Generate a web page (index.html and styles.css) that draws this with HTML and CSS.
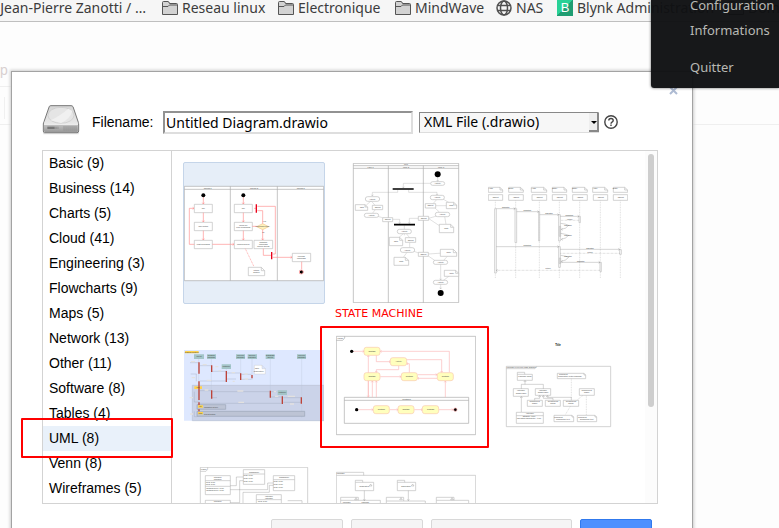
FILE: index.html
```html
<!DOCTYPE html>
<html lang="en">
<head>
<meta charset="utf-8">
<title>New diagram</title>
<link rel="stylesheet" href="styles.css">
</head>
<body>
<svg class="symbols" aria-hidden="true">
  <symbol id="folder" viewBox="0 0 16 14"><path d="M.5 13V1.5Q.5.5 1.5.5H6Q7 .5 7.5 2.500H14.500Q15.500 2.500 15.500 3.500V13.500H.500Z" fill="#d2d2d2" stroke="#555"/><path d="M1 5.500H6L7.500 4H15" fill="none" stroke="#555"/></symbol>
</svg>
<nav class="bookmarks" aria-label="Bookmarks">
  <a class="bookmark first" href="#">Jean-Pierre Zanotti / …</a>
  <a class="bookmark" href="#"><svg class="folder"><use href="#folder"/></svg>Reseau linux</a>
  <a class="bookmark" href="#"><svg class="folder"><use href="#folder"/></svg>Electronique</a>
  <a class="bookmark" href="#"><svg class="folder"><use href="#folder"/></svg>MindWave</a>
  <a class="bookmark" href="#"><svg class="site" viewBox="0 0 16 16" fill="none" stroke="#505050" stroke-width="1.500"><circle cx="8" cy="8" r="7"/><ellipse cx="8" cy="8" rx="3.500" ry="7"/><path d="M1.500 5.500H14.500M1.500 10.500H14.500"/></svg>NAS</a>
  <a class="bookmark" href="#"><span class="blynk">B</span>Blynk Administration</a>
  <a class="bookmark" href="#"><svg class="folder"><use href="#folder"/></svg>Domb</a>
</nav>
<div class="menu">
  <button>Configuration</button>
  <button>Informations</button>
  <button class="quit">Quitter</button>
</div>
<main class="workspace">
  <div class="backdrop" aria-hidden="true"><span>p</span><i></i></div>
  <section class="dialog" role="dialog" aria-label="New diagram">
    <button class="close" aria-label="Close"><svg viewBox="0 0 9 9"><path d="M1 1L8 8M8 1L1 8" stroke="#aebbd3" stroke-width="2"/></svg></button>
    <form class="filebar">
      <svg class="drive" viewBox="0 0 114 90" aria-hidden="true">
        <defs><linearGradient id="top" x2="0" y2="1"><stop stop-color="#d5d5d5"/><stop offset="1" stop-color="#f1f1f1"/></linearGradient><linearGradient id="front" x2="0" y2="1"><stop stop-color="#c2c2c2"/><stop offset="1" stop-color="#999"/></linearGradient></defs>
        <path d="M4 85H110" stroke="#ddd" stroke-width="6"/>
        <path d="M22 4Q24 2 27 2H87Q91 2 93 5L109 52Q110 56 110 60V78Q110 83 105 83H8Q4 83 4 78V57Q4 53 6 50Z" fill="url(#top)" stroke="#777" stroke-width="3"/>
        <ellipse cx="57" cy="31" rx="39" ry="24" fill="#e5e5e5" stroke="#c9c9c9" stroke-width="2"/>
        <path d="M26 46Q58 30 79 11L91 18Q84 42 57 54Z" fill="#f0f0f0"/>
        <path d="M6 59H108V79Q108 81 105 81H9Q6 81 6 78Z" fill="url(#front)"/><path d="M6 58H108" stroke="#f8f8f8" stroke-width="2"/>
        <path d="M16 65H38V72H16Z" fill="#777"/><path d="M40 65V72M44 65V72M48 65V72M66 63V77M72 63V77M78 63V77M84 63V77M90 63V77M96 63V77M102 63V77" stroke="#888" stroke-width="2"/>
      </svg>
      <label class="file-label" for="filename">Filename:</label>
      <input class="filename" id="filename" value="Untitled Diagram.drawio">
      <span class="format"><select aria-label="File format"><option>XML File (.drawio)</option></select><svg class="arrow" viewBox="0 0 10 19"><path d="M0 0H10V19H0Z" fill="#eee"/><path d="M0 18H9V0" fill="none" stroke="#888" stroke-width="2"/><path d="M2 8H8L5 11Z"/></svg></span>
      <a class="help" href="#" aria-label="Help"><svg viewBox="0 0 14 14" fill="none" stroke="#444"><circle cx="7" cy="7" r="6.200" stroke-width="1.400"/><path d="M4.800 5.500Q4.800 3.500 7 3.500T9.200 5.500Q9.200 6.500 8 7.200Q7 7.800 7 8.700M7 9.600V11" stroke-width="1.400"/></svg></a>
    </form>
    <div class="picker">
      <ul class="categories">
        <li>Basic (9)</li><li>Business (14)</li><li>Charts (5)</li><li>Cloud (41)</li><li>Engineering (3)</li><li>Flowcharts (9)</li><li>Maps (5)</li><li>Network (13)</li><li>Other (11)</li><li>Software (8)</li><li>Tables (4)</li><li class="selected">UML (8)</li><li>Venn (8)</li><li>Wireframes (5)</li>
      </ul>
      <div class="gallery">
        <button class="thumb chosen" aria-label="Activity diagram with threads">
          <svg viewBox="27 24 420 420">
            <path class="box grey" d="M28 94H446V377H28ZM28 103H446M166 94V377M307 94V377"/>
            <g class="box"><path d="M58 148H112V173H58ZM58 202H112V227H58ZM58 256H112V281H58ZM178 148H232V173H178ZM178 202H232V227H178ZM178 256H232V281H178ZM237 256H293V281H237ZM352 295H407V320H352Z"/><path d="M220 337H259L269 347V362H220ZM259 337V347H269"/></g>
            <path class="decision" d="M245 215L263 206L281 215L263 224Z"/>
            <g class="flow"><path d="M85 125V147M85 173V201M85 227V255M58 268H43V160H57M112 268H177M205 125V147M205 173V201M205 227V255M232 214H245M263 224V255M263 206V167H247M237 160H244M265 281V301H288M293 297H301V154H247M293 307H351M380 320V343"/><path d="M211 281L237 335" stroke-dasharray="3 2"/><path d="M82 143L85 147L88 143M82 197L85 201L88 197M82 251L85 255L88 251M202 143L205 147L208 143M202 197L205 201L208 197M202 251L205 255L208 251M53 157L57 160L53 163M173 265L177 268L173 271M347 304L351 307L347 310M260 251L263 255L266 251"/></g>
            <path d="M244 148V173M290 291V313" stroke="#e9001a" stroke-width="4"/>
            <g><circle cx="85" cy="121" r="6"/><circle cx="205" cy="121" r="6"/><circle cx="379" cy="351" r="6" stroke="#faa" stroke-width="3"/></g>
            <g class="tiny"><text x="98" y="101">Thread 1</text><text x="237" y="101">Thread 2</text><text x="377" y="101">Thread 3</text><text x="85" y="162">idle</text><text x="85" y="217">user action</text><text x="85" y="271">post command</text><text x="205" y="162">idle</text><text x="205" y="213">check for</text><text x="205" y="219">new commands</text><text x="205" y="271">confirm queue</text><text x="263" y="217">command ready</text><text x="268" y="202">yes</text><text x="265" y="234">no</text><text x="265" y="263">dispatch</text><text x="265" y="270">command</text><text x="265" y="276">worker thread</text><text x="379" y="305">process</text><text x="379" y="312">command</text><text x="244" y="349">critical</text><text x="244" y="355">section</text></g>
          </svg>
        </button>
        <button class="thumb" aria-label="Activity diagram with pools">
          <svg viewBox="-12 24 420 420">
            <path class="box grey" d="M40 25H356V443H40ZM40 32H356M40 40H356M145 32V443M250 32V443"/>
            <path class="link" d="M293 66V79M272 85H190V99M173 104V112H97V123M206 104V112H291V121M113 184L128 188M158 193H179V206M235 190H208V206M193 211V223M193 236V241M209 263V277M219 288L236 294M265 297L325 293M265 303L287 318M302 328V375M302 388V402M290 134L279 146M285 159L298 171M290 183L266 190M94 138L106 152M93 138L79 150M106 164L98 174M190 236L176 248M199 236L209 248M201 292L190 307M299 126L329 144M326 152L287 152M314 184L318 208M265 190L310 220M310 317L322 304M309 377L328 363"/>
            <path class="link" d="M290 75L293 79L296 75M187 95L190 99L193 95M94 119L97 123L100 119M288 117L291 121L294 117M176 202L179 206L182 202M205 202L208 206L211 202M299 371L302 375L305 371M299 398L302 402L305 398"/>
            <g class="box"><rect x="272" y="80" width="42" height="11" rx="6"/><rect x="76" y="125" width="43" height="14" rx="7"/><rect x="73" y="175" width="43" height="12" rx="6"/><rect x="271" y="121" width="42" height="13" rx="6"/><rect x="286" y="172" width="43" height="13" rx="6"/><rect x="172" y="223" width="42" height="13" rx="6"/><rect x="181" y="278" width="43" height="14" rx="7"/><rect x="280" y="316" width="43" height="12" rx="6"/><rect x="280" y="376" width="43" height="12" rx="6"/><path d="M97 151H128V164H97ZM128 188H158V200H128ZM235 184H266V196H235ZM256 146H287V159H256ZM196 248H227V262H196ZM235 292H265V304H235Z"/></g>
            <g class="box"><path d="M46 149H75L83 156V166H46ZM75 149V156H83M319 142H341L350 150V161H319ZM341 142V150H350M298 208H332L341 217V233H298ZM332 208V217H341M148 247H179L188 256V272H148ZM179 247V256H188M301 283H340L350 293V304H301ZM340 283V293H350M162 307H196L206 316V331H162ZM196 307V316H206M313 346H347L356 355V364H313ZM347 346V355H356"/></g>
            <path d="M158 102H221M162 209H225" stroke="#000" stroke-width="5"/><circle cx="293" cy="58" r="9"/><circle cx="302" cy="414" r="9"/>
            <g class="tiny"><text x="198" y="31">Pool</text><text x="92" y="39">Lane 1</text><text x="198" y="39">Lane 2</text><text x="303" y="39">Lane 3</text><text x="293" y="87">Activity</text><text x="97" y="134">Activity</text><text x="95" y="183">Activity</text><text x="292" y="129">Activity</text><text x="307" y="180">Activity</text><text x="193" y="231">Activity</text><text x="202" y="287">Activity</text><text x="302" y="324">Activity</text><text x="302" y="384">Activity</text><text x="66" y="159">Note</text><text x="113" y="159">Object</text><text x="143" y="195">Object</text><text x="251" y="192">Object</text><text x="271" y="154">Object</text><text x="212" y="257">Object</text><text x="250" y="300">Object</text><text x="334" y="154">Note</text><text x="319" y="222">Note</text><text x="168" y="262">Note</text><text x="326" y="295">Note</text><text x="184" y="321">Note</text><text x="335" y="357">Note</text></g>
          </svg>
        </button>
        <button class="thumb" aria-label="Sequence diagram">
          <svg viewBox="24 24 420 420">
            <path class="link" d="M46 136V370M107 136V370M178 136V370M238 136V370M299 136V370M361 136V370M421 136V370" stroke-dasharray="3 2"/>
            <g class="box"><path d="M25 119H68V136H25ZM86 119H130V136H86ZM156 119H200V136H156ZM217 119H260V136H217ZM278 119H322V136H278ZM340 119H383V136H340ZM400 119H443V136H400Z"/><path d="M25 97H60L68 105V112H25ZM60 97V105H68M86 97H121L130 105V112H86ZM121 97V105H130M154 97H191L200 105V112H154ZM191 97V105H200M217 97H252L260 105V112H217ZM252 97V105H260M277 97H314L322 105V112H277ZM314 97V105H322M338 97H374L383 105V112H338ZM374 97V105H383M400 97H434L443 105V112H400ZM434 97V105H443"/><path d="M44 161H49V354H44ZM105 161H110V263H105ZM176 170H179V258H176ZM236 179H241V258H236ZM297 184H301V203H297ZM236 275H241V337H236ZM419 284H424V298H419ZM360 322H364V350H360ZM238 214H242V244H238ZM238 309H242V326H238Z"/></g>
            <g class="line"><path d="M49 161H105M110 170H176M179 179H236M241 184H297M49 275H236M241 283H419M242 322H360M242 205Q259 207 266 211Q258 222 244 223M242 235Q259 238 266 241Q258 251 244 253M242 301Q259 303 266 307Q258 317 244 319"/><path d="M297 196H241M419 295H241M360 346H49" stroke-dasharray="2 2"/><path d="M101 158L105 161L101 164M172 167L176 170L172 173M232 176L236 179L232 182M293 181L297 184L293 187M232 272L236 275L232 278M415 280L419 283L415 286M356 319L360 322L356 325M53 343L49 346L53 349M248 220L244 223L248 226M248 250L244 253L248 256M248 316L244 319L248 322"/></g>
            <g class="tiny"><text x="46" y="130">:Object</text><text x="108" y="130">:Object</text><text x="178" y="130">:Object</text><text x="239" y="130">:Object</text><text x="300" y="130">:Object</text><text x="362" y="130">:Object</text><text x="422" y="130">:Object</text><text x="32" y="102">Actor</text><text x="93" y="102">Entity</text><text x="161" y="102">Actor</text><text x="224" y="102">Entity</text><text x="284" y="102">Entity</text><text x="345" y="102">Actor</text><text x="406" y="102">Entity</text><text x="77" y="159">dispatch</text><text x="142" y="168">dispatch</text><text x="207" y="177">dispatch</text><text x="268" y="182">dispatch</text><text x="269" y="194">return</text><text x="264" y="212">dispatch</text><text x="264" y="243">dispatch</text><text x="142" y="273">dispatch</text><text x="330" y="281">dispatch</text><text x="330" y="294">return</text><text x="264" y="307">dispatch</text><text x="302" y="321">dispatch</text><text x="204" y="343">return</text></g>
          </svg>
        </button>
        <button class="thumb" aria-label="Coloured sequence diagram">
          <svg viewBox="27 45 420 420">
            <path d="M27 150H447V362H27Z" fill="#dee8ff"/><path d="M52 256H447V362H52Z" fill="#cbd3e9" stroke="#b9c1d3" stroke-width="2"/>
            <path class="life" d="M71 177V350M109 177V296M154 207V246M197 177V240M231 177V240M286 177V294M322 284V312M380 177V353"/>
            <path d="M66 314H152V328H66ZM66 334H389V349H66Z" fill="#bdc4d5" stroke="#9ca6b8" stroke-width="2"/>
            <path d="M57 163H87V177H57ZM96 163H123V177H96ZM183 163H210V177H183ZM218 163H246V177H218ZM272 163H299V177H272ZM366 163H393V177H366ZM140 193H168V207H140ZM308 271H336V285H308Z" fill="#a4c5c8"/>
            <path d="M30 153H71V160H30ZM58 259H81V267H58ZM69 316H84V323H69ZM69 336H84V343H69Z" fill="#ffd34f"/>
            <path class="signal" d="M45 188H71M74 197H108M110 214H154M156 219H196M199 223H229M199 238H229M154 237H183M74 243H154M47 222H65M64 222V244M74 272H108M110 275H283M74 310H320M288 275H304M288 291H320M325 293H378M325 307H378M58 275V306H70M58 334V350H66M111 293H126"/>
            <g class="activation"><path d="M72 187V221M72 244V300M110 196V216M154 213V246M197 220V240M231 225V235M110 271V296M286 272V293M322 289V312M379 292V311"/><path d="M72 307V315M72 328V334"/></g>
            <path d="M238 196H261L271 206V222H238ZM261 196V206H271" fill="#fff" stroke="#bbb"/>
            <g class="labels"><path d="M48 185H60M83 194H95M121 200H130M130 212H138M170 218H180M208 222H218M173 244H179M50 233H60M95 241H109M89 270H100M187 273H205M190 307H207M296 275H303M300 289H310M338 289H360M345 312H357M44 293H54M45 342H54M209 237H219"/></g>
            <g class="tiny"><text x="50" y="158">Trading System</text><text x="72" y="171">Client</text><text x="109" y="169">Session</text><text x="109" y="174">Manager</text><text x="197" y="169">Service</text><text x="197" y="174">Manager</text><text x="231" y="169">Service</text><text x="231" y="174">Manager</text><text x="286" y="169">Database</text><text x="286" y="174">Server</text><text x="380" y="169">Service</text><text x="380" y="174">Manager</text><text x="154" y="200">Instance</text><text x="322" y="278">Instance</text><text x="246" y="208">Note</text><text x="251" y="216">description</text><text x="69" y="265">opt</text><text x="76" y="322">alt</text><text x="76" y="342">loop</text><text x="108" y="324">condition is true</text><text x="104" y="344">repeat action</text></g>
          </svg>
        </button>
        <button class="thumb" aria-label="State machine diagram">
          <svg viewBox="63 45 420 420">
            <path class="box grey" d="M64 109H482V404H64ZM64 121H83L89 114V109M88 292H461V370H88ZM88 301H461"/>
            <g class="flow soft"><path d="M114 154H147M184 166V185H226M251 197V209H184V217M196 230H258M283 218V191H275M275 179H380V217M403 217V154H196M308 224H366M366 235H308M391 292V243M160 292V167M172 292V243M184 292V243M160 243V290M130 329H174M224 329H249M298 329H322M371 329H414"/><path d="M143 151L147 154L143 157M222 182L226 185L222 188M181 213L184 217L187 213M254 227L258 230L254 233M279 188L275 191L279 194M377 213L380 217L383 213M200 151L196 154L200 157M362 221L366 224L362 227M312 232L308 235L312 238M388 247L391 243L394 247M157 171L160 167L163 171M169 247L172 243L175 247M181 247L184 243L187 247M157 287L160 291L163 287M170 326L174 329L170 332M245 326L249 329L245 332M318 326L322 329L318 332M410 326L414 329L410 332"/></g>
            <g class="state"><rect x="147" y="142" width="48" height="24" rx="7"/><rect x="226" y="173" width="49" height="24" rx="7"/><rect x="147" y="218" width="48" height="24" rx="7"/><rect x="259" y="218" width="48" height="24" rx="7"/><rect x="367" y="218" width="48" height="24" rx="7"/><rect x="175" y="317" width="48" height="24" rx="7"/><rect x="249" y="317" width="48" height="24" rx="7"/><rect x="322" y="317" width="49" height="24" rx="7"/></g>
            <circle cx="110" cy="154" r="5"/><circle cx="125" cy="329" r="5"/><circle cx="421" cy="329" r="5" stroke="#f9a4a4" stroke-width="2"/>
            <g class="tiny"><text x="76" y="117">Frame</text><text x="171" y="156">Subtask</text><text x="251" y="187">Activity</text><text x="171" y="232">Subtask</text><text x="283" y="232">Subtask</text><text x="391" y="232">Subtask</text><text x="199" y="331">Subtask</text><text x="273" y="331">Subtask</text><text x="347" y="331">Subtask</text><text x="275" y="299">Container</text></g>
          </svg>
        </button>
        <button class="thumb" aria-label="Class diagram">
          <svg viewBox="-6 -45 420 420">
            <path class="box" d="M49 109H362V290H49ZM49 116H135L140 111V109M82 133H127V151H82ZM82 133V127H104V133M70 176H115V199H70ZM136 176H182V196H136ZM112 211H157V229H112ZM166 211H211V229H166ZM220 211H266V229H220ZM268 176H313V196H268ZM79 247H160V280H79ZM79 257H160"/>
            <path class="box" d="M202 130H282L287 135V146H202ZM282 130V135H287M192 256H246L251 261V275H192ZM246 256V261H251M262 256H315L320 261V275H262ZM315 256V261H320"/>
            <path class="line" d="M105 152V163M94 176V163H160V176M94 200V246M149 197V205H134V211M160 197V205H189V211M172 197V202H244V211M101 156L105 152L109 156M90 204L94 200L98 204M145 201L149 197L153 201M156 201L160 197L164 201M168 201L172 197L176 201"/><path class="link" d="M244 146V205M278 197L260 211M241 229L226 254M289 197V255" stroke-dasharray="3 2"/>
            <g class="tiny"><text class="title" x="204" y="47">Title</text><text x="94" y="114">Package overview class diagram</text><text x="105" y="141">Package name</text><text x="93" y="183">Interface</text><text x="93" y="191">Class name</text><text x="159" y="183">Interface</text><text x="159" y="190">Class name</text><text x="134" y="217">Component</text><text x="134" y="223">Name</text><text x="189" y="217">Component</text><text x="189" y="223">Name</text><text x="243" y="217">Component</text><text x="243" y="223">Name</text><text x="290" y="183">Component</text><text x="290" y="190">Name</text><text x="120" y="253">Interface</text><text x="117" y="262">attribute : type</text><text x="117" y="267">operation(parameter) : type</text><text x="220" y="136">Comment</text><text x="240" y="140">description of the package</text><text x="205" y="264">Comment</text><text x="219" y="269">description text</text><text x="277" y="264">Comment</text><text x="290" y="269">description text</text></g>
          </svg>
        </button>
        <button class="thumb" aria-label="Package frame diagram">
          <svg viewBox="42 81 420 420">
            <path class="box" d="M91 82H413V400H91ZM91 94H108L113 88V82M106 107H181V164H106ZM106 122H181M106 139H181M220 89H284V133H220ZM220 102H284M310 107H374V152H310ZM310 119H374M259 164H334V210H259ZM259 179H334M106 181H181V230H106ZM353 182H396V225H353"/>
            <path class="line" d="M181 137H199V111H220M181 149H293V129H310M181 188H209V122H220M219 190V157H298V136H310"/>
            <g class="tiny"><text x="101" y="90">Frame</text><text x="143" y="114">Interface</text><text x="143" y="119">Interface</text><text x="122" y="128">field: Type</text><text x="122" y="135">field: Type</text><text x="135" y="147">method(Type): Type</text><text x="135" y="152">method(Type): Type</text><text x="252" y="98">Classname</text><text x="235" y="107">field: Type</text><text x="235" y="117">field: Type</text><text x="235" y="127">field: Type</text><text x="342" y="115">Classname</text><text x="325" y="125">field: Type</text><text x="325" y="135">field: Type</text><text x="325" y="145">field: Type</text><text x="297" y="171">Interface</text><text x="297" y="176">Interface</text><text x="278" y="186">field: Type</text><text x="143" y="186">Interface</text></g>
          </svg>
        </button>
        <button class="thumb" aria-label="Package dependency diagram">
          <svg viewBox="498 81 420 420">
            <path class="box" d="M499 106H917V400H499ZM499 106V97H581V106M556 127H611V152H556ZM556 127V121H578V127M682 127H737V152H682ZM682 127V121H704V127M512 181H631V230H512ZM512 181V172H565V181M649 183H766V230H649ZM649 183V172H701V183M799 181H896V230H799ZM799 181V172H852V181"/>
            <path class="line" d="M583 152V181M715 152V181M580 178L583 182L586 178M712 178L715 182L718 178M598 138L602 132L606 138ZM724 138L728 132L732 138ZM554 179L558 173L562 179ZM689 179L693 173L697 179ZM842 179L846 173L850 179Z"/>
            <g class="tiny"><text x="512" y="102">Package</text><text x="583" y="141">subsystem</text><text x="708" y="141">subsystem</text><text x="530" y="190">Package</text><text x="586" y="190">Package</text></g>
          </svg>
        </button>
      </div>
      <div class="scrollbar" aria-hidden="true"><span></span></div>
    </div>
    <div class="actions">
      <button aria-label="Help"></button><button aria-label="Cancel"></button><button class="wide" aria-label="From template URL"></button><button class="primary" aria-label="Create"></button>
    </div>
  </section>
</main>
<div class="marker category-marker"></div>
<div class="marker diagram-marker"></div>
<p class="caption">STATE MACHINE</p>
</body>
</html>
```
FILE: styles.css
```css
* { box-sizing: border-box; }
body { margin: 0; height: 100vh; overflow: hidden; position: relative; background: #fdfdfd; color: #000; font: 14px "Liberation Sans", sans-serif; }
button { font: inherit; padding: 0; }
.symbols { position: absolute; width: 0; height: 0; }

.bookmarks { display: grid; grid-template-columns: 146px 100px 101px 85px 45px 155px 70px; column-gap: 16px; height: 22px; padding-bottom: 8px; align-items: end; overflow: hidden; background: #f6f6f6; border-bottom: 1px solid #bfbfbf; font: 14px/14px "Noto Sans", sans-serif; }
.bookmark { display: flex; align-items: center; gap: 4px; height: 16px; white-space: nowrap; color: #3c3c3c; text-decoration: none; }
.bookmark.first { justify-content: flex-end; }
.folder { width: 16px; height: 14px; flex: none; }
.site { width: 16px; height: 16px; flex: none; }
.blynk { width: 16px; height: 16px; flex: none; background: linear-gradient(135deg, #28d196 50%, #1f9d72 50%); color: #fff; font: 13px/16px "Liberation Sans", sans-serif; text-align: center; }
.bookmarks { padding-bottom: 9px; }

.menu { position: absolute; z-index: 3; top: 0; right: 0; width: 128px; height: 88px; padding-left: 39px; display: flex; flex-direction: column; align-items: flex-start; background: rgba(16, 17, 19, .97); border-radius: 0 0 0 3px; box-shadow: 0 0 3px rgba(0, 0, 0, .6); overflow: hidden; }
.menu button { flex: none; height: 25px; border: 0; background: none; color: #b8b8b4; font: 13px/25px "Noto Sans", sans-serif; }
.menu button:first-child { margin-top: -7px; }
.menu .quit { margin-top: 12px; }

.workspace { position: relative; padding: 49px 86px 0 11px; }
.backdrop { position: absolute; top: 38px; left: 0; right: 0; height: 65px; border-bottom: 1px solid #efefef; color: #d8d0d0; line-height: 20px; }
.backdrop i { display: block; width: 5px; height: 22px; margin-top: 10px; border-right: 1px solid #f0f0f0; }
.backdrop span { display: block; height: 27px; border-bottom: 1px solid #efefef; }
.dialog { position: relative; padding: 31px 34px 20px 30px; background: #fff; border: 1px solid #a3a3a3; box-shadow: 0 0 3px 1px #ccc; }
.close { position: absolute; top: 14px; right: 14px; width: 9px; height: 9px; border: 0; background: none; }
.close svg, .help svg { display: block; width: 100%; height: 100%; }
.filebar { display: flex; align-items: center; height: 38px; margin-bottom: 9px; }
.drive { width: 38px; height: 30px; margin-bottom: 5px; flex: none; }
.file-label { width: 71px; margin-left: 12px; }
.filename { width: 250px; height: 23px; padding: 0 1px; border: 2px solid; border-color: #929292 #dedede #dedede #929292; border-radius: 0; background: #fff; color: #000; font: 14px "Noto Sans", sans-serif; }
.format { position: relative; width: 180px; height: 21px; margin-left: 6px; }
.format select { appearance: none; width: 100%; height: 100%; padding: 0 4px; border: 1px solid; border-color: #888 #ddd #ddd #888; border-radius: 0; background: #f7f7f7; color: #000; font: 14px/18px "Noto Sans", sans-serif; }
.arrow { position: absolute; right: 0; top: 1px; width: 10px; height: 19px; pointer-events: none; }
.help { width: 14px; height: 14px; margin-left: 5px; }

.picker { position: relative; display: flex; height: 354px; border: 1px solid #d3d3d3; overflow: hidden; }
.categories { width: 129px; flex: none; margin: 0; padding: 0; list-style: none; border-right: 1px solid #d3d3d3; }
.categories li { height: 25px; padding-left: 6px; line-height: 24px; }
.categories .selected { background: #e9f1fa; }
.gallery { flex: 1; display: grid; grid-template-columns: repeat(auto-fill, 142px); grid-auto-rows: 142px; gap: 10px; align-content: start; padding: 11px 0 0 11px; overflow: hidden; }
.thumb { border: 1px solid transparent; border-radius: 2px; background: none; }
.thumb.chosen { background: #e6eef8; border-color: #c5d5e9; }
.thumb svg { display: block; width: 140px; height: 140px; }
.scrollbar { width: 12px; padding: 3px 3px 0; background: #fcfcfc; }
.scrollbar span { display: block; width: 6px; height: 253px; border-radius: 3px; background: #cecece; }

.box { fill: #fff; stroke: #bdbdbd; stroke-width: 2; }
.grey { stroke: #a9a9a9; }
.link { fill: none; stroke: #a4a4a4; stroke-width: 1; }
.line { fill: none; stroke: #808080; stroke-width: 1; }
.flow { fill: none; stroke: #ff8f8f; stroke-width: 2; }
.soft { stroke: #fbb9b9; }
.decision { fill: #fff2bd; stroke: #f0c58b; stroke-width: 2; }
.state { fill: #ffffbd; stroke: #f9c8ad; stroke-width: 2; }
.life { stroke: #b9c3d9; stroke-width: 1; fill: none; }
.signal { stroke: #969db0; stroke-width: 1; fill: none; }
.activation { stroke: #bd4339; stroke-width: 4; }
.labels { stroke: #e3e1df; stroke-width: 4; }
.tiny { fill: #444; font: 6px "Liberation Sans", sans-serif; text-anchor: middle; }
.tiny .title { fill: #000; font-size: 8px; font-weight: bold; }

.actions { display: flex; justify-content: flex-end; gap: 8px; padding: 15px 6px 0 0; }
.actions button { width: 72px; height: 29px; border: 1px solid #d8d8d8; border-radius: 2px; background: #f5f5f5; }
.actions .wide { width: 141px; }
.actions .primary { background: #4d90fe; border-color: #3079ed; }

.marker { position: absolute; z-index: 2; border: 2px solid #f00; border-radius: 1px; pointer-events: none; }
.category-marker { left: 21px; top: 418px; width: 152px; height: 40px; }
.diagram-marker { left: 320px; top: 326px; width: 169px; height: 122px; }
.caption { position: absolute; z-index: 2; left: 335px; top: 307px; margin: 0; color: #f00; font: 11px/13px "DejaVu Sans", sans-serif; }
```
